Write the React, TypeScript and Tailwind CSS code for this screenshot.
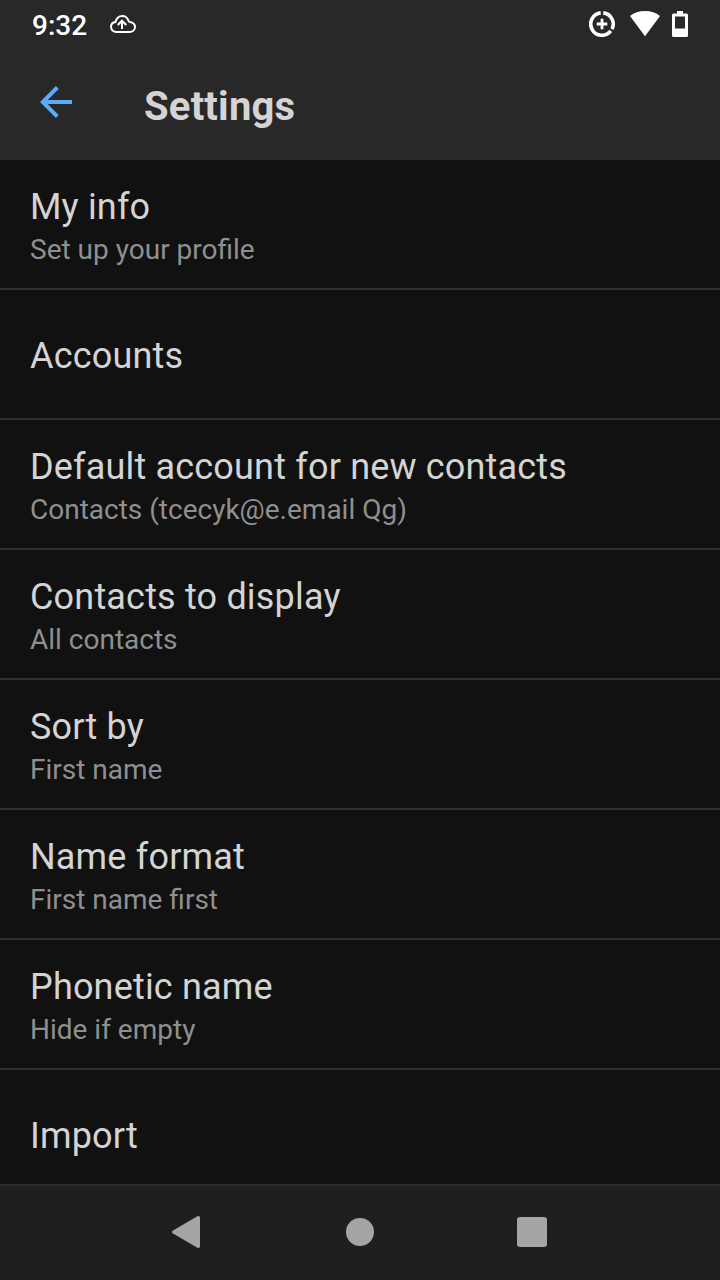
interface SettingItem {
    title: string;
    summary?: string;
}

const settings: SettingItem[] = [
    { title: "My info", summary: "Set up your profile" },
    { title: "Accounts" },
    { title: "Default account for new contacts", summary: "Contacts (tcecyk@e.email Qg)" },
    { title: "Contacts to display", summary: "All contacts" },
    { title: "Sort by", summary: "First name" },
    { title: "Name format", summary: "First name first" },
    { title: "Phonetic name", summary: "Hide if empty" },
    { title: "Import" },
];

function StatusBar() {
    return (
        <div className="flex h-12 items-center justify-between pl-8 pr-8 text-white">
            <div className="flex items-center">
                <span className="w-[78px] pt-1 text-[28px] font-medium leading-8">9:32</span>
                <svg width="26" height="18" viewBox="0 0 26 18" fill="none" stroke="currentColor" strokeWidth="2">
                    <path d="M6.5 17C3.200 17 1 14.800 1 12c0-2.700 1.900-4.700 4.500-5C6.500 3.200 9.300 1 12.300 1c3.300 0 5.200 1.700 6.300 4.900 .2.700.5 1 1.200 1 3.100.4 5.200 2.500 5.200 5.100 0 2.900-2.300 5-5.500 5z" />
                    <path d="M12 14V6M7.700 10l4.300-4.300 4.300 4.300" />
                </svg>
            </div>
            <div className="flex items-center">
                {/* Data saver */}
                <svg className="mr-[15px]" width="26" height="26" viewBox="0 0 26 26" fill="none" stroke="currentColor">
                    <path strokeWidth="3.600" d="M14.300 1.900A11.200 11.200 0 0 1 23 18.100M21.800 19.900A11.200 11.200 0 1 1 11.700 1.900" />
                    <path strokeWidth="2.800" d="M13 7.700v10.600M7.700 13h10.600" />
                </svg>
                {/* Wifi */}
                <svg className="mr-3" width="30" height="26" viewBox="0 0 30 26" fill="currentColor">
                    <path d="M0 5C4 1.700 9.200 0 15 0s11 1.700 15 5L15 25.300z" />
                </svg>
                {/* Battery */}
                <svg width="16" height="26" viewBox="0 0 16 26" fill="currentColor">
                    <path fillRule="evenodd" d="M5 0h6v2.500h3.500A1.500 1.500 0 0 1 16 4v20.500a1.500 1.500 0 0 1-1.500 1.500h-13A1.500 1.500 0 0 1 0 24.500V4a1.500 1.500 0 0 1 1.500-1.500H5zM3 5.500v12h10v-12z" />
                </svg>
            </div>
        </div>
    );
}

function Header() {
    return (
        <div className="flex h-28 items-start pl-10">
            <button type="button" aria-label="Back" className="mt-[38px] text-[#5cabf9]">
                <svg width="32" height="32" viewBox="0 0 32 32" fill="none" stroke="currentColor" strokeWidth="4">
                    <path d="M32 16H4M17.300 1.500L2.800 16l14.500 14.500" />
                </svg>
            </button>
            <h1 className="ml-[72px] mt-[35px] text-[40px] font-bold leading-[48px] tracking-[0.2px] text-[#d4d4d4]">Settings</h1>
        </div>
    );
}

function SettingRow({ title, summary }: SettingItem) {
    return (
        <li className="flex h-[130px] shrink-0 flex-col justify-center border-b-2 border-[#303030] px-[30px] pt-1">
            <span className="text-[36px] leading-[42px] tracking-[0.18px] text-[#d4d4d4]">{title}</span>
            {summary && <span className="mt-1 text-[28px] leading-[35px] text-[#8f8f8f]">{summary}</span>}
        </li>
    );
}

function NavigationBar() {
    return (
        <nav className="flex h-24 shrink-0 justify-center border-t-2 border-[#2b2b2b] bg-[#1f1f1f] pb-[2px] text-[#a5a5a5]">
            <button type="button" aria-label="Back" className="flex w-[172px] items-center justify-center pr-1">
                <svg width="28" height="32" viewBox="0 0 28 32" fill="currentColor">
                    <path d="M.7 14.700L25.300.3Q28-.7 28 2v28q0 2.700-2.700 1.700L.7 17.300Q-.7 16 .7 14.700z" />
                </svg>
            </button>
            <button type="button" aria-label="Home" className="flex w-[172px] items-center justify-center">
                <span className="size-7 rounded-full bg-[#a5a5a5]" />
            </button>
            <button type="button" aria-label="Recents" className="flex w-[172px] items-center justify-center">
                <span className="size-[30px] rounded-[3px] bg-[#a5a5a5]" />
            </button>
        </nav>
    );
}

export default function App() {
    return (
        <div className="flex h-[1280px] w-[720px] flex-col overflow-hidden bg-[#111111] font-['Roboto',sans-serif]">
            <header className="h-40 shrink-0 bg-[#282828]">
                <StatusBar />
                <Header />
            </header>
            <ul className="flex min-h-0 flex-1 flex-col overflow-hidden">
                {settings.map((item) => (
                    <SettingRow key={item.title} {...item} />
                ))}
            </ul>
            <NavigationBar />
        </div>
    );
}
